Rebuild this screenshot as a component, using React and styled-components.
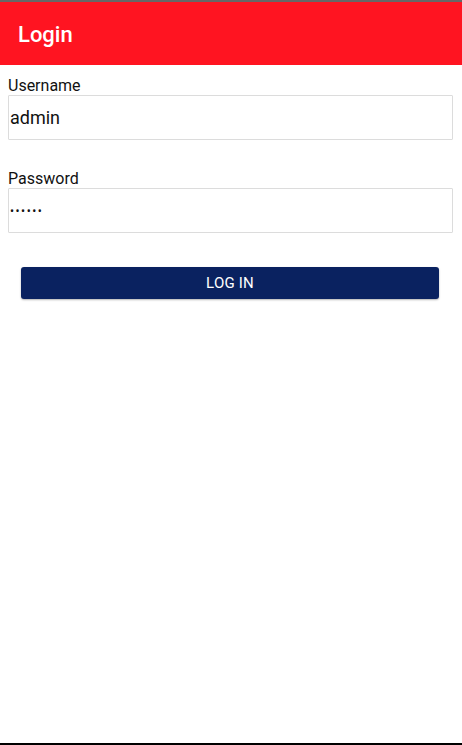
import React from "react";
import styled, { createGlobalStyle } from "styled-components";

const Global = createGlobalStyle`
  html, body { margin: 0; padding: 0; background: #fff; }
  * { box-sizing: border-box; }
  body { font-family: Roboto, "Noto Sans", "Liberation Sans", sans-serif; }
`;

const Screen = styled.div`
  min-height: 100vh;
  display: flex;
  flex-direction: column;
  border-top: 2px solid #676767;
  border-bottom: 2px solid #000;
  background: #fff;
`;

const Header = styled.header`
  height: 63px;
  background: #ff1421;
  display: flex;
  align-items: center;
  padding-left: 18px;
`;

const Title = styled.h1`
  margin: 0;
  color: #fff;
  font-size: 22px;
  font-weight: 500;
  line-height: 1;
  padding-top: 2px;
`;

const Form = styled.form`
  display: flex;
  flex-direction: column;
  padding: 12px 9px 0 8px;
  flex: 1;
`;

const Field = styled.div`
  display: flex;
  flex-direction: column;
  margin-bottom: ${(p) => p.$gap}px;
`;

const Label = styled.label`
  font-size: 16px;
  line-height: 18px;
  color: #111;
`;

const Input = styled.input`
  height: 45px;
  border: 1px solid #dcdcdc;
  border-radius: 1px;
  padding: 0 1px;
  font-family: Roboto, "Noto Sans", sans-serif;
  font-size: ${(p) => (p.type === "password" ? "12px" : "18px")};
  letter-spacing: ${(p) => (p.type === "password" ? "1.5px" : "0")};
  color: #111;
  outline: none;
  background: #fff;
`;

const Button = styled.button`
  margin: 0 14px 0 13px;
  height: 32px;
  background: #0a2260;
  color: #fff;
  border: none;
  border-radius: 3px;
  box-shadow: 0 1px 2px rgba(0, 0, 0, 0.3);
  font-family: Roboto, "Noto Sans", sans-serif;
  font-size: 15px;
  letter-spacing: 0.2px;
  text-transform: uppercase;
  cursor: pointer;
`;

export default function App() {
  return (
    <>
      <Global />
      <Screen>
        <Header>
          <Title>Login</Title>
        </Header>
        <Form onSubmit={(e) => e.preventDefault()}>
          <Field $gap={30}>
            <Label>Username</Label>
            <Input type="text" defaultValue="admin" />
          </Field>
          <Field $gap={34}>
            <Label>Password</Label>
            <Input type="password" defaultValue="123456" />
          </Field>
          <Button type="submit">Log In</Button>
        </Form>
      </Screen>
    </>
  );
}
